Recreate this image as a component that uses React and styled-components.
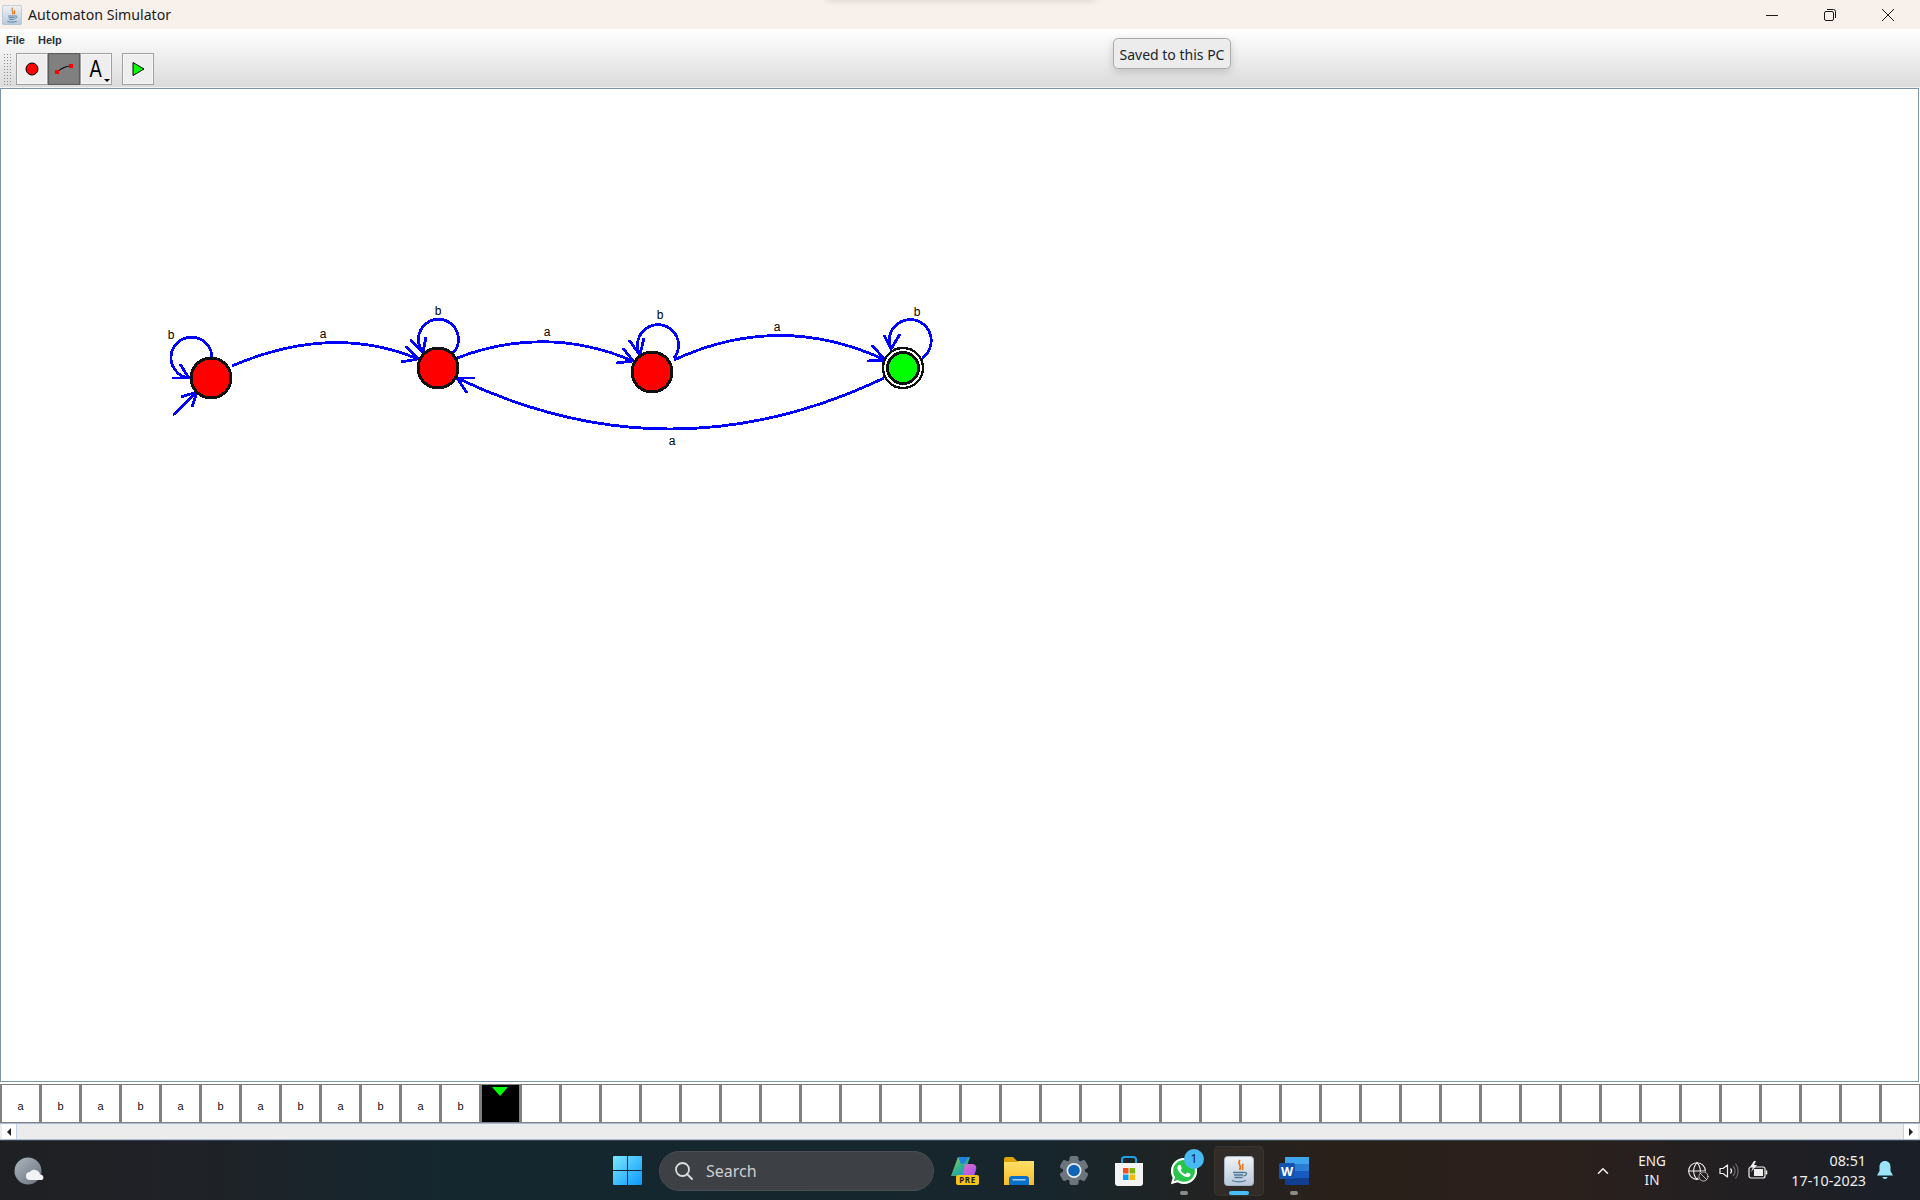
import React from 'react';
import styled, {createGlobalStyle} from 'styled-components';
import {ChevronUp, Globe, Ban} from 'lucide-react';
import {FaWhatsapp} from 'react-icons/fa';

const UI_FONT = '"Noto Sans", "Open Sans", sans-serif';
const SWING_FONT = '"Liberation Sans", Arial, sans-serif';

const GlobalStyle = createGlobalStyle`
  html, body {
    margin: 0;
    padding: 0;
    background: #fff;
  }
`;

const Page = styled.div`
  width: 1920px;
  height: 1200px;
  display: flex;
  flex-direction: column;
  overflow: hidden;
  font-family: ${UI_FONT};
`;

const TitleBar = styled.div`
  position: relative;
  height: 29px;
  flex: none;
  display: flex;
  align-items: center;
  padding-left: 2px;
  background: #f8f0eb;
`;

const TitleIcon = styled.div`
  width: 20px;
  height: 20px;
  margin-top: 1px;
`;

const TitleText = styled.div`
  margin-left: 6px;
  font-size: 14.15px;
  color: #1c1c1c;
`;

const FlyoutShadow = styled.div`
  position: absolute;
  left: 825px;
  top: -12px;
  width: 272px;
  height: 12px;
  border-radius: 6px;
  box-shadow: 0 1px 6px rgba(60, 40, 30, 0.14);
`;

const WindowControls = styled.div`
  margin-left: auto;
  display: flex;
  padding-right: 26px;
  gap: 46px;
`;

const WindowButton = styled.svg`
  width: 12px;
  height: 12px;
  display: block;
  fill: none;
  stroke: #1a1a1a;
  stroke-width: 1;
`;

const ChromeArea = styled.div`
  position: relative;
  height: 58px;
  flex: none;
  border-bottom: 1px solid #f2f2f2;
  background: linear-gradient(#ffffff, #dbdbdb);
`;

const MenuBar = styled.div`
  height: 24px;
  display: flex;
  align-items: center;
  padding: 0 0 3px 6px;
  gap: 13px;
  box-sizing: border-box;
`;

const MenuItem = styled.span`
  font: bold 11px ${SWING_FONT};
  color: #2c3038;
`;

const ToolBar = styled.div`
  display: flex;
  padding-left: 3px;
`;

const Grip = styled.div`
  width: 9px;
  height: 32px;
  margin-right: 4px;
  background: radial-gradient(circle, #8c8c8c 0.7px, transparent 0.9px) 0 0 / 3px 3px;
`;

const ToolButton = styled.div`
  position: relative;
  width: 32px;
  height: 32px;
  margin-left: ${props => props.$gap || 0}px;
  box-sizing: border-box;
  display: flex;
  align-items: center;
  justify-content: center;
  border: 1px solid ${props => (props.$pressed ? '#5c5c5c' : '#a0a0a0')};
  box-shadow: inset 0 0 0 1px ${props => (props.$pressed ? '#7a7a7a' : '#f6f6f6')};
  background: ${props => (props.$pressed ? '#808080' : '#eeeeee')};
`;

const ToolIcon = styled.svg`
  width: 24px;
  height: 24px;
  display: block;
`;

const FontLetter = styled.span`
  font: 23px ${SWING_FONT};
  line-height: 24px;
  margin: 0 0 1px 0;
  color: #000;
  transform: scaleX(0.8);
`;

const DropCaret = styled.span`
  position: absolute;
  right: 1px;
  bottom: 2px;
  border-left: 3px solid transparent;
  border-right: 3px solid transparent;
  border-top: 3px solid #000;
`;

const SavedTip = styled.div`
  position: absolute;
  left: 1113px;
  top: 9px;
  width: 118px;
  height: 31px;
  box-sizing: border-box;
  display: flex;
  align-items: center;
  justify-content: center;
  padding-top: 1px;
  border: 1px solid #ababab;
  border-radius: 5px;
  background: #ececec;
  box-shadow: 0 3px 9px rgba(0, 0, 0, 0.16);
  font-size: 14px;
  color: #20242c;
`;

const Canvas = styled.div`
  flex: 1;
  min-height: 0;
  margin-right: 1px;
  border: 1px solid #7f93a8;
  background: #fff;
`;

const GraphSvg = styled.svg`
  display: block;
  width: 100%;
  height: 100%;
`;

const Edge = styled.path`
  fill: none;
  stroke: #0000ff;
  stroke-width: 2.8;
  shape-rendering: crispEdges;
`;

const EdgeLabel = styled.text`
  font: 12px ${SWING_FONT};
  fill: #000;
  text-anchor: middle;
`;

const TapeRow = styled.div`
  height: 39px;
  flex: none;
  margin-top: 2px;
  box-sizing: border-box;
  display: flex;
  gap: 3px;
  padding: 1px 0 1px 2px;
  background: #808080;
`;

const TapeCell = styled.div`
  position: relative;
  width: 37px;
  flex: none;
  display: flex;
  align-items: center;
  justify-content: center;
  padding-top: 5px;
  box-sizing: border-box;
  background: ${props => (props.$current ? '#000' : '#fff')};
  font: 11px ${SWING_FONT};
  color: #111;
`;

const TapeHead = styled.span`
  position: absolute;
  left: 10px;
  top: 2px;
  border-left: 8px solid transparent;
  border-right: 8px solid transparent;
  border-top: 9px solid #00ff00;
`;

const ScrollTrack = styled.div`
  height: 17px;
  flex: none;
  box-sizing: border-box;
  display: flex;
  justify-content: space-between;
  padding: 0 2px;
  border-top: 1px solid #a9bed6;
  border-bottom: 1px solid #a9bed6;
  background: #ececec;
`;

const ScrollButton = styled.div`
  width: 14px;
  display: flex;
  align-items: center;
  justify-content: center;
  background: #fff;
  box-shadow: ${props => (props.$side === 'left' ? '1px' : '-1px')} 0 0 #c2d2e6;
`;

const ScrollArrow = styled.span`
  border-top: 4px solid transparent;
  border-bottom: 4px solid transparent;
  ${props => (props.$side === 'left' ? 'border-right' : 'border-left')}: 4px solid #222;
`;

const TaskBar = styled.div`
  height: 60px;
  flex: none;
  display: flex;
  align-items: center;
  box-sizing: border-box;
  border-top: 1px solid #3e4246;
  background: linear-gradient(90deg, #1f2024 0, #1f2227 200px, #14272f 450px, #17262c 1050px, #2a201a 1330px, #2b201c 1560px, #1a1f28 1900px);
`;

const WeatherIcon = styled.svg`
  width: 30px;
  height: 28px;
  margin-left: 14px;
  flex: none;
`;

const StartIcon = styled.svg`
  width: 29px;
  height: 29px;
  margin-left: 569px;
  flex: none;
`;

const SearchBox = styled.div`
  width: 275px;
  height: 40px;
  margin-left: 17px;
  flex: none;
  box-sizing: border-box;
  display: flex;
  align-items: center;
  padding-left: 15px;
  gap: 13px;
  border: 1px solid #4a4e52;
  border-radius: 20px;
  background: #3d4045;
  color: #cfcfcf;
  font-size: 16px;
`;

const AppGroup = styled.div`
  display: flex;
  gap: 5px;
  margin-left: 5px;
`;

const AppSlot = styled.div`
  position: relative;
  width: 50px;
  height: 50px;
  display: flex;
  align-items: center;
  justify-content: center;
  border-radius: 5px;
  ${props => props.$active && 'background: #322c29; box-shadow: inset 0 0 0 1px #3a3431;'}
`;

const AppIndicator = styled.span`
  position: absolute;
  bottom: 1px;
  left: 50%;
  transform: translateX(-50%);
  width: ${props => (props.$active ? 20 : 8)}px;
  height: 4px;
  border-radius: 2px;
  background: ${props => (props.$active ? '#47bdf8' : '#8b8b8b')};
`;

const AppBadge = styled.span`
  position: absolute;
  right: 5px;
  top: 3px;
  width: 20px;
  height: 20px;
  border-radius: 50%;
  display: flex;
  align-items: center;
  justify-content: center;
  background: #48b9f2;
  color: #10202c;
  font-size: 12px;
`;

const WhatsappIcon = styled.div`
  position: relative;
  width: 30px;
  height: 30px;
  color: #fff;
`;

const WhatsappFill = styled.span`
  position: absolute;
  inset: 2px;
  border-radius: 50%;
  background: #27c54c;
`;

const WhatsappGlyph = styled(FaWhatsapp)`
  position: absolute;
  left: 0;
  top: 0;
  width: 30px;
  height: 30px;
`;

const Tray = styled.div`
  margin-left: auto;
  display: flex;
  align-items: center;
  padding-right: 27px;
  color: #f0f0f0;
`;

const TrayChevron = styled(ChevronUp)`
  margin-right: 24px;
`;

const LangBlock = styled.div`
  width: 32px;
  margin-right: 19px;
  text-align: center;
  font-size: 13.5px;
  line-height: 19px;
`;

const TrayIconBox = styled.div`
  position: relative;
  width: 20px;
  height: 20px;
  margin-right: ${props => props.$gap}px;
`;

const GlobeBan = styled(Ban)`
  position: absolute;
  right: -2px;
  bottom: -1px;
  border-radius: 50%;
  background: #251f20;
`;

const ClockBlock = styled.div`
  width: 84px;
  margin-right: 11px;
  text-align: right;
  font-size: 14.3px;
  line-height: 20px;
`;

const JavaIcon = ({size}) => (
  <svg width={size} height={size} viewBox="0 0 30 30">
    <defs>
      <linearGradient id={`javaTile${size}`} x1="0" y1="0" x2="0" y2="1">
        <stop offset="0" stopColor="#f0f3f7" />
        <stop offset="1" stopColor="#b8c9da" />
      </linearGradient>
    </defs>
    <rect x="0.5" y="0.5" width="29" height="29" rx="3" fill={`url(#javaTile${size})`} stroke="#a5b6c8" />
    <path d="M16 4c-4 4 3 5-.5 10M19.500 8c-3 2.500 1 3.500-1.500 6" fill="none" stroke="#e8771c" strokeWidth="1.700" />
    <path d="M9 16.500h11M10 19h9M10.500 21.500h8M20 16.500c4-.5 3 3-.5 3.500M8 24.500c4 1.500 10 1.500 14 0" fill="none" stroke="#4f7896" strokeWidth="1.300" />
  </svg>
);

const CopilotIcon = () => (
  <svg width="29" height="29" viewBox="0 0 29 29">
    <defs>
      <linearGradient id="cpLeft" x1="0" y1="0" x2="1" y2="1">
        <stop offset="0" stopColor="#a8d84a" />
        <stop offset="0.5" stopColor="#34b28c" />
        <stop offset="1" stopColor="#1a8fe0" />
      </linearGradient>
      <linearGradient id="cpRight" x1="0" y1="0" x2="1" y2="1">
        <stop offset="0" stopColor="#e86ad0" />
        <stop offset="1" stopColor="#9a56e8" />
      </linearGradient>
    </defs>
    <path d="M8 1h12l-5 15c-1 3-3 4-6 4H1z" fill="url(#cpLeft)" />
    <path d="M8 1h12c-2 1-4 3-5 6L11 8z" fill="#1f7fe0" />
    <path d="M15 8h7c3 0 5 2 4 6l-2 6H13z" fill="url(#cpRight)" />
    <rect x="6" y="19" width="23" height="10" rx="2" fill="#f8c21c" />
    <text x="17.500" y="27" textAnchor="middle" fontFamily={UI_FONT} fontWeight="700" fontSize="8" letterSpacing="0.6" fill="#1a1a1a">PRE</text>
  </svg>
);

const FolderIcon = () => (
  <svg width="30" height="28" viewBox="0 0 30 28">
    <defs>
      <linearGradient id="folderBody" x1="0" y1="0" x2="0" y2="1">
        <stop offset="0" stopColor="#ffe06a" />
        <stop offset="1" stopColor="#f8bd25" />
      </linearGradient>
    </defs>
    <path d="M0 2a2 2 0 0 1 2-2h7l4 4h17v8H0z" fill="#dda300" />
    <path d="M0 5h13l2-1h15v24H0z" fill="url(#folderBody)" />
    <path d="M5 28v-6c0-2 1-3 3-3h14c2 0 3 1 3 3v6z" fill="#0a6fca" />
    <rect x="8.500" y="22" width="13" height="1.500" fill="#9ed0f5" />
  </svg>
);

const GearIcon = () => (
  <svg width="30" height="29" viewBox="0 0 30 29">
    <g fill="#6c747d" transform="translate(15 14.500)">
      {[0, 60, 120, 180, 240, 300].map(deg => (
        <rect key={deg} x="-4.500" y="-14.500" width="9" height="8" rx="2" transform={`rotate(${deg})`} />
      ))}
      <circle r="11" />
    </g>
    <circle cx="15" cy="14.500" r="7.500" fill="#e8ecf0" />
    <circle cx="15" cy="14.500" r="5.800" fill="#0f63b5" />
  </svg>
);

const StoreIcon = () => (
  <svg width="30" height="30" viewBox="0 0 30 30">
    <path d="M8 8V3.500C8 2 9 1 10.500 1h9C21 1 22 2 22 3.500V8" fill="none" stroke="#1ea0e0" strokeWidth="2" />
    <path d="M1 7h28v20a3 3 0 0 1-3 3H4a3 3 0 0 1-3-3z" fill="#f3f3f3" />
    <rect x="9" y="12" width="5.500" height="5.500" fill="#f0501e" />
    <rect x="15.500" y="12" width="5.500" height="5.500" fill="#7db900" />
    <rect x="9" y="18.500" width="5.500" height="5.500" fill="#00a1f0" />
    <rect x="15.500" y="18.500" width="5.500" height="5.500" fill="#ffb900" />
  </svg>
);

const WordIcon = () => (
  <svg width="30" height="28" viewBox="0 0 30 28">
    <rect x="6" y="0" width="24" height="7" fill="#41a5ee" />
    <rect x="6" y="7" width="24" height="7" fill="#2b7cd3" />
    <rect x="6" y="14" width="24" height="7" fill="#185abd" />
    <rect x="6" y="21" width="24" height="7" rx="1" fill="#103f91" />
    <rect x="0" y="6" width="16" height="16" rx="1.500" fill="#1553b0" />
    <text x="8" y="18.500" textAnchor="middle" fontFamily={UI_FONT} fontWeight="700" fontSize="12.500" fill="#fff">W</text>
  </svg>
);

const SpeakerIcon = () => (
  <svg width="20" height="20" viewBox="0 0 20 20" fill="none" strokeWidth="1.200">
    <path d="M1 7.500h3L8.500 4v12L4 12.500H1z" stroke="#f0f0f0" strokeLinejoin="round" />
    <path d="M11.500 7.500c1.300 1.500 1.300 3.500 0 5" stroke="#f0f0f0" />
    <path d="M14 5c2.500 3 2.500 7 0 10M16.500 2.500c3.500 4.500 3.500 10.500 0 15" stroke="#6a6a6a" />
  </svg>
);

const BatteryIcon = () => (
  <svg width="20" height="20" viewBox="0 0 20 20" fill="none" stroke="#f0f0f0">
    <rect x="1" y="6" width="16" height="11" rx="2" strokeWidth="1.200" />
    <rect x="6" y="8" width="9" height="7" fill="#f0f0f0" stroke="none" />
    <path d="M18.500 9.500v4" strokeWidth="1.500" />
    <path d="M6 0 2 6h3l-2 5 6-7H6l2-4z" fill="#f0f0f0" stroke="none" />
  </svg>
);

const BellIcon = () => (
  <svg width="16" height="20" viewBox="0 0 16 20">
    <path d="M8 0c3.500 0 5.500 2.500 5.500 6v4l2.500 4.500H0L2.500 10V6C2.500 2.500 4.500 0 8 0z" fill="#9be3f7" />
    <path d="M5.500 16h5c0 2.500-5 2.500-5 0z" fill="#9be3f7" />
  </svg>
);

const tapeCells = Array.from({length: 48}, (_, i) => {
  if (i < 12) return i % 2 === 0 ? 'a' : 'b';
  return '';
});

// page coordinates, shifted by the group below
const edges = [
  // initial arrow
  'M173 415L197 392M181 397L197 392L192 407',
  // transitions on a
  'M232 366Q332 323 418 359M401 362L418 359L406 346',
  'M457 358Q546 324 633 361M616 363L633 361L623 348',
  'M674 360Q780 311 885 360M867 361L885 360L872 345',
  'M884 378Q670 480 457 378M475 378L457 378L467 393',
  // loops on b
  'M212 358A20.500 20.500 0 1 0 189 378M172 378L189 378L180 364',
  'M453 353A20 20 0 1 0 423 352M410 340L423 352L426 337',
  'M674 358A20.500 20.500 0 1 0 640 355M629 340L640 355L644 338',
  'M922 358A21 21 0 1 0 891 349M884 335L891 349L900 334'
];

const labels = [
  ['b', 171, 339],
  ['a', 323, 338],
  ['b', 438, 315],
  ['a', 547, 336],
  ['b', 660, 319],
  ['a', 777, 331],
  ['b', 917, 316],
  ['a', 672, 445]
];

const AutomatonGraph = () => (
  <GraphSvg>
    <g transform="translate(-1 -89)">
      {edges.map(d => (
        <Edge key={d} d={d} />
      ))}
      {[[211, 378], [438, 368], [652, 372]].map(([x, y]) => (
        <circle key={x} cx={x} cy={y} r="20" fill="#ff0000" stroke="#111" strokeWidth="3" shapeRendering="crispEdges" />
      ))}
      <circle cx="903" cy="368" r="20" fill="#fff" stroke="#111" strokeWidth="2.500" shapeRendering="crispEdges" />
      <circle cx="903" cy="368" r="15.500" fill="#00ff00" stroke="#111" strokeWidth="3" shapeRendering="crispEdges" />
      {labels.map(([text, x, y]) => (
        <EdgeLabel key={`${x}${text}`} x={x} y={y}>
          {text}
        </EdgeLabel>
      ))}
    </g>
  </GraphSvg>
);

export default function App() {
  return (
    <Page>
      <GlobalStyle />
      <TitleBar>
        <FlyoutShadow />
        <TitleIcon>
          <JavaIcon size={20} />
        </TitleIcon>
        <TitleText>Automaton Simulator</TitleText>
        <WindowControls>
          <WindowButton viewBox="0 0 12 12">
            <path d="M0 6.500h12" />
          </WindowButton>
          <WindowButton viewBox="0 0 12 12">
            <rect x="0.500" y="2.500" width="9" height="9" rx="1.500" />
            <path d="M3 .5h6.500a2 2 0 0 1 2 2V9" />
          </WindowButton>
          <WindowButton viewBox="0 0 12 12">
            <path d="M0 0l12 12M12 0L0 12" />
          </WindowButton>
        </WindowControls>
      </TitleBar>

      <ChromeArea>
        <MenuBar>
          <MenuItem>File</MenuItem>
          <MenuItem>Help</MenuItem>
        </MenuBar>
        <ToolBar>
          <Grip />
          <ToolButton>
            <ToolIcon viewBox="0 0 24 24">
              <circle cx="12" cy="12" r="6" fill="#ff0000" stroke="#000" />
            </ToolIcon>
          </ToolButton>
          <ToolButton $pressed>
            <ToolIcon viewBox="0 0 24 24">
              <path d="M5 15Q12 9 19 9" fill="none" stroke="#000" strokeWidth="1.200" />
              <rect x="3" y="13" width="4" height="4" fill="#ff0000" />
              <rect x="17" y="7" width="4" height="4" fill="#ff0000" />
            </ToolIcon>
          </ToolButton>
          <ToolButton>
            <FontLetter>A</FontLetter>
            <DropCaret />
          </ToolButton>
          <ToolButton $gap={10}>
            <ToolIcon viewBox="0 0 24 24">
              <path d="M7 5.500L18 12L7 18.500z" fill="#00ff00" stroke="#000" />
            </ToolIcon>
          </ToolButton>
        </ToolBar>
        <SavedTip>Saved to this PC</SavedTip>
      </ChromeArea>

      <Canvas>
        <AutomatonGraph />
      </Canvas>

      <TapeRow>
        {tapeCells.map((symbol, i) => (
          <TapeCell key={i} $current={i === 12}>
            {symbol}
            {i === 12 && <TapeHead />}
          </TapeCell>
        ))}
      </TapeRow>

      <ScrollTrack>
        <ScrollButton $side="left">
          <ScrollArrow $side="left" />
        </ScrollButton>
        <ScrollButton $side="right">
          <ScrollArrow $side="right" />
        </ScrollButton>
      </ScrollTrack>

      <TaskBar>
        <WeatherIcon viewBox="0 0 30 28">
          <defs>
            <linearGradient id="moon" x1="0" y1="0" x2="1" y2="1">
              <stop offset="0" stopColor="#aeb6c0" />
              <stop offset="1" stopColor="#68707c" />
            </linearGradient>
          </defs>
          <circle cx="14" cy="14" r="13.500" fill="url(#moon)" />
          <path d="M16 23a4 4 0 0 1 0-8 5 5 0 0 1 7-1.500 4.500 4.500 0 0 1 3 4 3 3 0 0 1 2 5.500z" fill="#f2f3f5" />
        </WeatherIcon>
        <StartIcon viewBox="0 0 29 29">
          <defs>
            <linearGradient id="winTile" x1="0" y1="0" x2="1" y2="1">
              <stop offset="0" stopColor="#7ae7ff" />
              <stop offset="1" stopColor="#0a98fb" />
            </linearGradient>
          </defs>
          <path d="M0 1a1 1 0 0 1 1-1h13v14H0zM15 0h13a1 1 0 0 1 1 1v13H15zM0 15h14v14H1a1 1 0 0 1-1-1zM15 15h14v13a1 1 0 0 1-1 1H15z" fill="url(#winTile)" />
        </StartIcon>
        <SearchBox>
          <svg width="18" height="18" viewBox="0 0 18 18" fill="none" stroke="#dcdcdc" strokeWidth="1.800">
            <circle cx="7.500" cy="7.500" r="6.500" />
            <path d="M12 12l5 5" strokeLinecap="round" />
          </svg>
          Search
        </SearchBox>
        <AppGroup>
          <AppSlot>
            <CopilotIcon />
          </AppSlot>
          <AppSlot>
            <FolderIcon />
          </AppSlot>
          <AppSlot>
            <GearIcon />
          </AppSlot>
          <AppSlot>
            <StoreIcon />
          </AppSlot>
          <AppSlot>
            <WhatsappIcon>
              <WhatsappFill />
              <WhatsappGlyph />
            </WhatsappIcon>
            <AppBadge>1</AppBadge>
            <AppIndicator />
          </AppSlot>
          <AppSlot $active>
            <JavaIcon size={30} />
            <AppIndicator $active />
          </AppSlot>
          <AppSlot>
            <WordIcon />
            <AppIndicator />
          </AppSlot>
        </AppGroup>
        <Tray>
          <TrayChevron size={18} strokeWidth={2} />
          <LangBlock>
            ENG
            <br />
            IN
          </LangBlock>
          <TrayIconBox $gap={12}>
            <Globe size={20} strokeWidth={1.3} />
            <GlobeBan size={11} strokeWidth={1.6} />
          </TrayIconBox>
          <TrayIconBox $gap={9}>
            <SpeakerIcon />
          </TrayIconBox>
          <TrayIconBox $gap={14}>
            <BatteryIcon />
          </TrayIconBox>
          <ClockBlock>
            08:51
            <br />
            17-10-2023
          </ClockBlock>
          <BellIcon />
        </Tray>
      </TaskBar>
    </Page>
  );
}
